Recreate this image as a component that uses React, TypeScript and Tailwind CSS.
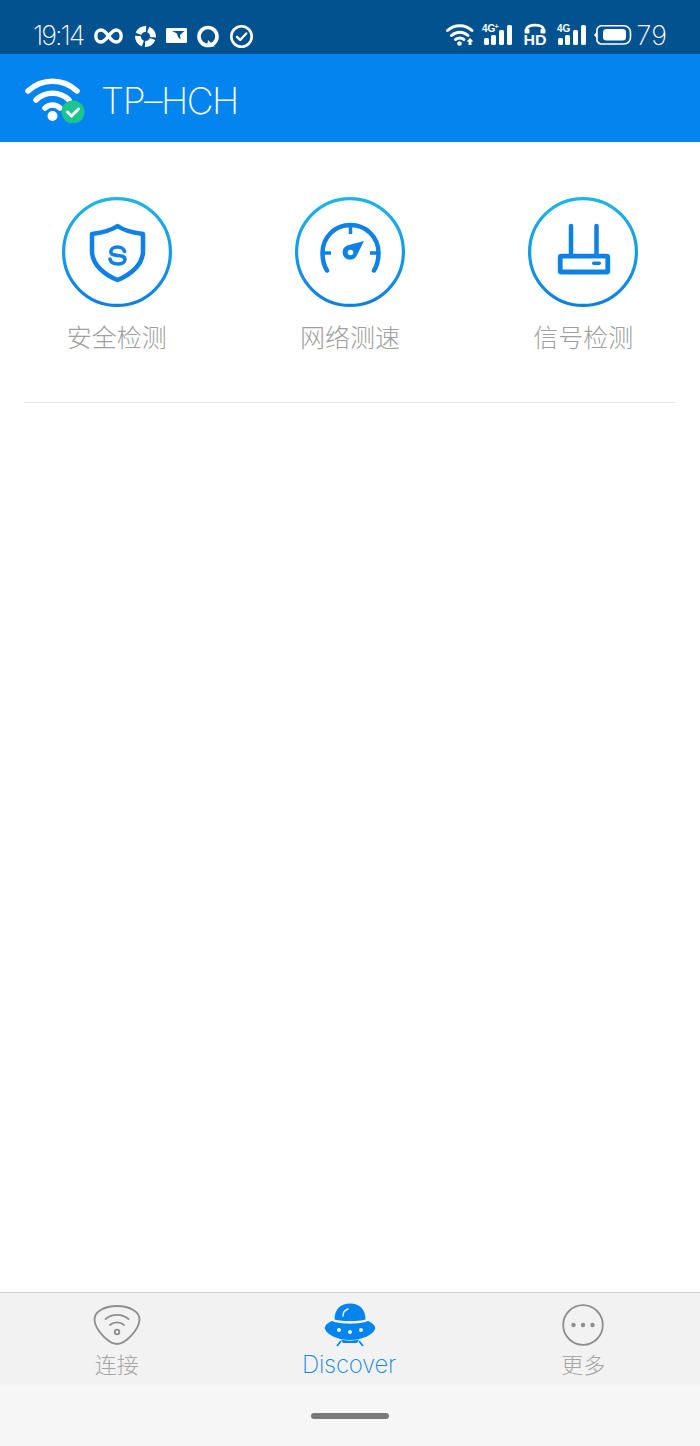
import React from "react";

const Ring = ({ id, children }: { id: string; children: React.ReactNode }) => (
  <svg width="110" height="110" viewBox="0 0 110 110" fill="none">
    <defs>
      <linearGradient id={id} x1="0" y1="0" x2="0" y2="1">
        <stop offset="0" stopColor="#1cb6e6" />
        <stop offset="1" stopColor="#0f7fe2" />
      </linearGradient>
    </defs>
    <circle cx="55" cy="55" r="53.4" stroke={`url(#${id})`} strokeWidth="3.200" />
    {children}
  </svg>
);

const Shield = () => (
  <Ring id="g1">
    <path d="M55.500 29 C50 33 41 35.500 30 37 V54 C30 68 43 78 55.500 83 C68 78 81 68 81 54 V37 C70 35.500 61 33 55.500 29 Z" stroke="#0f80e6" strokeWidth="4.500" strokeLinejoin="round" />
    <path d="M62.500 54.500 C62 51.800 59 50 55.500 50 C51.500 50 48.800 52 48.800 54.800 C48.800 61 63 56 63 62.500 C63 65.200 60 67 55.800 67 C51.500 67 48.500 65 48 62" stroke="#0f80e6" strokeWidth="3.600" strokeLinecap="round" />
  </Ring>
);

const Gauge = () => (
  <Ring id="g2">
    <path d="M32 73.500 C28.500 68 27.500 62 27.500 56 C27.500 40 40 28 55.500 28 C71 28 83.500 40 83.500 56 C83.500 62 82.500 68 79 73.500" stroke="#0f80e6" strokeWidth="4.500" strokeLinecap="round" />
    <path d="M55.500 28 V37 M28 56 H36 M75 56 H83" stroke="#0f80e6" strokeWidth="3.500" />
    <path d="M69 44 L61 60 A7.500 7.500 0 1 1 52 48.500 Z" fill="#0f80e6" />
    <circle cx="55.500" cy="55.500" r="2.800" fill="#fff" />
  </Ring>
);

const Router = () => (
  <Ring id="g3">
    <path d="M43 29 V57 M68.500 29 V57" stroke="#0f80e6" strokeWidth="4.500" strokeLinecap="round" />
    <rect x="32.200" y="59.200" width="47.600" height="15.800" rx="1" stroke="#0f80e6" strokeWidth="4.800" />
    <rect x="64" y="64.500" width="9" height="3.500" rx="1.700" fill="#0f80e6" />
  </Ring>
);

const WifiCheck = () => (
  <svg width="62" height="50" viewBox="0 0 62 50" fill="none">
    <path d="M3 18 C17 5 38 5 52 18" stroke="#fff" strokeWidth="5.500" strokeLinecap="round" />
    <path d="M11 27 C20 18 35 18 44 27" stroke="#fff" strokeWidth="5.500" strokeLinecap="round" />
    <path d="M20 35 C24 31 31 31 35 35" stroke="#fff" strokeWidth="5.500" strokeLinecap="round" />
    <circle cx="27.500" cy="43" r="5" fill="#fff" />
    <circle cx="48" cy="39" r="11.500" fill="#1cc58f" />
    <path d="M42.500 39 L46.500 43 L53.500 36" stroke="#fff" strokeWidth="3" strokeLinecap="round" strokeLinejoin="round" />
  </svg>
);

const StatusLeft = () => (
  <svg width="160" height="26" viewBox="0 0 160 26" fill="none">
    <path d="M14.500 13 C11.500 8.500 9 7 6.800 7 C3.800 7 1.800 10 1.800 13 C1.800 16 3.800 19 6.800 19 C10 19 12.500 15.500 14.500 13 C16.500 10.500 19 7 22.200 7 C25.200 7 27.200 10 27.200 13 C27.200 16 25.200 19 22.200 19 C20 19 17.500 17.500 14.500 13 Z" stroke="#fff" strokeWidth="3.400" />
    <g transform="rotate(20 51.500 13.500)">
      <circle cx="51.500" cy="13.500" r="7.500" stroke="#fff" strokeWidth="6" strokeDasharray="9.500 2.280" />
    </g>
    <rect x="72" y="5" width="21" height="15" rx="1.200" fill="#fff" />
    <path d="M78 8 H90.500 L86 12 L86.500 16.500 L84 14 L83 10.500 Z" fill="#02528f" />
    <circle cx="114" cy="13.500" r="9" stroke="#fff" strokeWidth="3.600" />
    <path d="M114 17 L121 23.500 H113 Z" fill="#fff" />
    <circle cx="147.500" cy="13.500" r="10.200" stroke="#fff" strokeWidth="2.600" />
    <path d="M143 13.800 L146.200 17 L152.200 10.500" stroke="#fff" strokeWidth="2.400" strokeLinecap="round" strokeLinejoin="round" />
  </svg>
);

const Bars = ({ x }: { x: number }) => (
  <g transform={`translate(${x} 0)`}>
    <rect x="0" y="17" width="5" height="7" rx="1.500" fill="#fff" />
    <rect x="7" y="14" width="5" height="10" rx="1.500" fill="#fff" />
    <rect x="15" y="9" width="5" height="15" rx="1.500" fill="#fff" />
    <rect x="23" y="4" width="5" height="20" rx="1.500" fill="#fff" />
  </g>
);

const tiny = { fontFamily: '"Liberation Sans", sans-serif', fontWeight: 700 };

const StatusRight = () => (
  <svg width="192" height="30" viewBox="0 0 192 30" fill="none">
    <path d="M2.500 9.500 C9.500 3 20 3 27 9.500" stroke="#fff" strokeWidth="3" strokeLinecap="round" />
    <path d="M6.500 14.500 C11.500 10 18 10 23 14.500" stroke="#fff" strokeWidth="3" strokeLinecap="round" />
    <path d="M10.500 18.500 C13 16.800 16.500 16.800 19 18.500" stroke="#fff" strokeWidth="3" strokeLinecap="round" />
    <circle cx="14.500" cy="22.500" r="2.300" fill="#fff" />
    <path d="M25 17 L28.500 20.500 H26.500 V24 H23.500 V20.500 H21.500 Z" fill="#fff" />

    <Bars x={39} />
    <rect x="37" y="1" width="17" height="12" fill="#02528f" />
    <text x="37" y="11" fill="#fff" fontSize="10" style={tiny}>4G</text>
    <text x="49.500" y="8" fill="#fff" fontSize="7" style={tiny}>+</text>

    <path d="M81.500 10.500 V9 C81.500 2.500 98.500 2.500 98.500 9 V10.500" stroke="#fff" strokeWidth="2.800" />
    <rect x="79.500" y="8" width="5" height="4.500" rx="1" fill="#fff" />
    <rect x="95.500" y="8" width="5" height="4.500" rx="1" fill="#fff" />
    <text x="78.500" y="24" fill="#fff" fontSize="14.500" textLength="23" lengthAdjust="spacingAndGlyphs" style={tiny}>HD</text>

    <Bars x={113} />
    <rect x="111" y="1" width="15" height="12" fill="#02528f" />
    <text x="112" y="11" fill="#fff" fontSize="10" style={tiny}>4G</text>

    <path d="M155.500 4.800 H179 A6.500 6.500 0 0 1 185.500 11.300 V16.500 A6.500 6.500 0 0 1 179 23 H155.500 A6.500 6.500 0 0 1 152 20 V8 A6.500 6.500 0 0 1 155.500 4.800 Z" stroke="#fff" strokeWidth="1.600" />
    <rect x="158" y="8" width="23" height="11.500" rx="3.500" fill="#fff" />
    <path d="M152 10.500 L149 14 L152 17.500 Z" fill="#fff" />
  </svg>
);

const Item = ({ icon, label }: { icon: React.ReactNode; label: string }) => (
  <div className="flex flex-col items-center">
    {icon}
    <span className="mt-[14px] text-[25px] leading-[35px] font-light text-[#a0a0a0]">{label}</span>
  </div>
);

export default function App() {
  return (
    <div
      className="flex h-[1446px] w-[700px] flex-col overflow-hidden bg-white"
      style={{ fontFamily: '"Inter", "Noto Sans CJK SC", sans-serif' }}
    >
      <div className="flex h-[54px] shrink-0 items-center bg-[#02528f] pt-[17px] pr-[33px] pl-[33px] text-white">
        <span className="w-[52px] text-[27px] leading-none font-extralight tracking-[-2px]">19:14</span>
        <div className="ml-[9px] flex items-center pt-[1px]"><StatusLeft /></div>
        <div className="ml-auto flex items-center pt-[1px]"><StatusRight /></div>
        <span className="text-[27px] leading-none font-extralight">79</span>
      </div>

      <div className="flex h-[88px] shrink-0 items-center bg-[#0384ee] pl-[25px] text-white">
        <WifiCheck />
        <span className="mt-[5px] ml-[14px] text-[37px] leading-none font-extralight tracking-[-1.500px]">TP–HCH</span>
      </div>

      <div className="mx-[24px] flex-1">
        <div className="-mx-[24px] grid grid-cols-3 pt-[55px]">
          <Item icon={<Shield />} label="安全检测" />
          <Item icon={<Gauge />} label="网络测速" />
          <Item icon={<Router />} label="信号检测" />
        </div>
        <div className="mt-[46px] h-px bg-[#e8e8e8]" />
      </div>

      <div className="grid h-[93px] shrink-0 grid-cols-3 border-t border-[#d0d0d0] bg-[#f2f2f2]">
        <div className="flex flex-col items-center pt-[11px]">
          <svg width="48" height="42" viewBox="0 0 48 42" fill="none">
            <path d="M24 2 C11 2 1 8 1.500 16 C2 25 15 40 24 40 C33 40 46 25 46.500 16 C47 8 37 2 24 2 Z" stroke="#8e8e8e" strokeWidth="1.800" />
            <path d="M12.500 15 C19 9.500 29 9.500 35.500 15" stroke="#8e8e8e" strokeWidth="1.800" strokeLinecap="round" />
            <path d="M17 21 C21 17.500 27 17.500 31 21" stroke="#8e8e8e" strokeWidth="1.800" strokeLinecap="round" />
            <circle cx="24" cy="28" r="2.300" stroke="#8e8e8e" strokeWidth="1.800" />
          </svg>
          <span className="mt-[4px] text-[22px] leading-[30px] font-light text-[#a5a5a5]">连接</span>
        </div>
        <div className="flex flex-col items-center pt-[10px]">
          <svg width="52" height="44" viewBox="0 0 52 44" fill="none">
            <path d="M10.500 16.500 C10.500 6 17 0.500 26 0.500 C35 0.500 41.500 6 41.500 16.500 C33 18.500 19 18.500 10.500 16.500 Z" fill="#0384ee" />
            <path d="M19 13 C19 9.500 21 7 24 6" stroke="#f2f2f2" strokeWidth="1.500" strokeLinecap="round" />
            <path d="M8 18 C15 21.500 37 21.500 44 18 C49 20 52 23.500 51 26 C49 32 38 37 26 37 C14 37 3 32 1 26 C0 23.500 3 20 8 18 Z" fill="#0384ee" />
            <circle cx="15" cy="27" r="2" fill="#f2f2f2" />
            <circle cx="26" cy="29" r="2" fill="#f2f2f2" />
            <circle cx="37" cy="27" r="2" fill="#f2f2f2" />
            <path d="M17 36.500 C21 38 31 38 35 36.500 L33 40 H19 Z" fill="#0384ee" />
            <path d="M17 38 L13 43 M35 38 L39 43" stroke="#0384ee" strokeWidth="1.800" />
          </svg>
          <span className="mt-[3px] mr-[2px] text-[24px] leading-[30px] font-extralight tracking-[-0.3px] text-[#1488e0]">Discover</span>
        </div>
        <div className="flex flex-col items-center pt-[11px]">
          <svg width="42" height="42" viewBox="0 0 42 42" fill="none">
            <circle cx="21" cy="21" r="19.800" stroke="#8e8e8e" strokeWidth="1.800" />
            <circle cx="11.500" cy="21" r="2.200" fill="#8e8e8e" />
            <circle cx="21" cy="21" r="2.200" fill="#8e8e8e" />
            <circle cx="30.500" cy="21" r="2.200" fill="#8e8e8e" />
          </svg>
          <span className="mt-[4px] text-[22px] leading-[30px] font-light text-[#a5a5a5]">更多</span>
        </div>
      </div>

      <div className="flex h-[61px] shrink-0 items-center justify-center bg-[#f6f6f6]">
        <div className="h-[6px] w-[78px] rounded-full bg-[#7a7a7a]" />
      </div>
    </div>
  );
}
